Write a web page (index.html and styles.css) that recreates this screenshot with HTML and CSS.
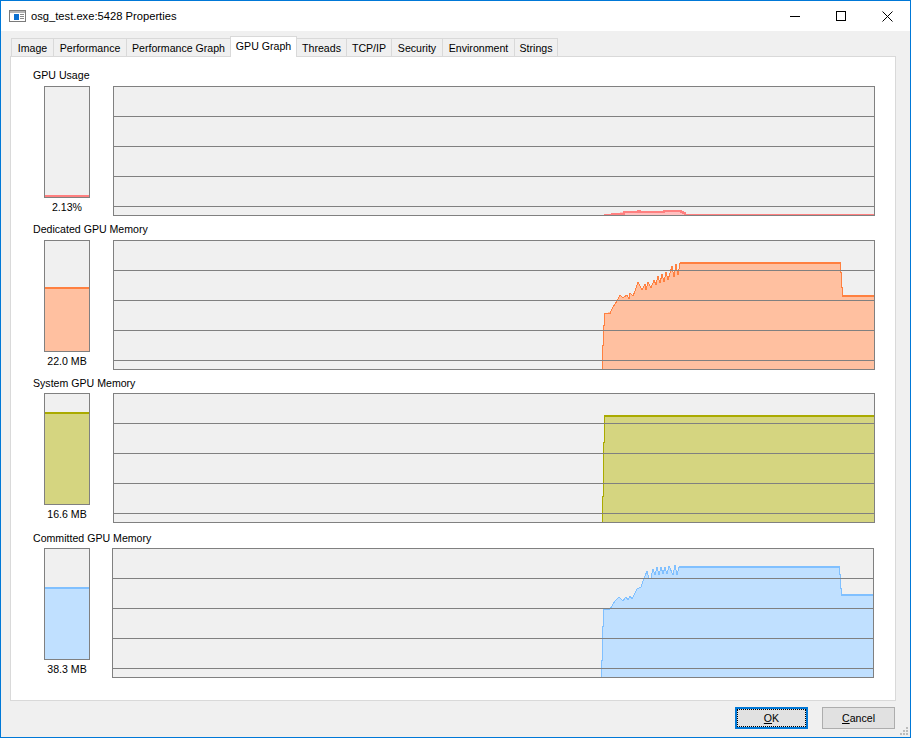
FILE: index.html
```html
<!DOCTYPE html>
<html lang="en">
<head>
  <meta charset="UTF-8" />
  <title>osg_test.exe:5428 Properties</title>
  <link rel="stylesheet" href="styles.css">
</head>
<body>
  <div class="window">
    <div class="titlebar">
      <svg class="app-icon" width="17" height="12" viewBox="0 0 17 12">
        <rect x="0.5" y="0.5" width="16" height="11" fill="#fff" stroke="#7a7a7a"/>
        <rect x="1" y="1" width="15" height="2" fill="#b5b5b5"/>
        <rect x="5" y="4" width="5" height="6" fill="#0a6fd0"/>
        <path d="M11 4.5h4M11 6.5h4M11 8.5h4" stroke="#8a8a8a"/>
      </svg>
      <span class="title">osg_test.exe:5428 Properties</span>
      <div class="controls">
        <button class="ctl"><svg width="10" height="10" viewBox="0 0 10 10"><path d="M0 5.5h10" stroke="#000"/></svg></button>
        <button class="ctl"><svg width="10" height="10" viewBox="0 0 10 10"><rect x="0.5" y="0.5" width="9" height="9" fill="none" stroke="#000"/></svg></button>
        <button class="ctl ctl-close"><svg width="11" height="11" viewBox="0 0 11 11"><path d="M0.5 0.5l10 10M10.5 0.5l-10 10" stroke="#000"/></svg></button>
      </div>
    </div>

    <div class="panel">
      <div class="tabs">
        <div class="tab tab-image">Image</div>
        <div class="tab tab-perf">Performance</div>
        <div class="tab tab-perfgraph">Performance Graph</div>
        <div class="tab tab-gpu active">GPU Graph</div>
        <div class="tab tab-threads">Threads</div>
        <div class="tab tab-tcp">TCP/IP</div>
        <div class="tab tab-security">Security</div>
        <div class="tab tab-env">Environment</div>
        <div class="tab tab-strings">Strings</div>
      </div>

      <div class="pane">
        <section class="section">
          <div class="section-label">GPU Usage</div>
          <div class="section-row">
            <div class="meter-col">
              <div class="meter"><div class="meter-fill usage" style="height:2px"></div></div>
              <div class="meter-value">2.13%</div>
            </div>
            <svg class="graph" viewBox="114 87 760 128">
              <path class="fill-usage" d="M604 215V214L612 213.5L624 212L638 211L640 212H646L647 211.5H664L665 210.5H681L683 212L685 214V215Z"/>
              <path class="line-usage" d="M604 214.5H612V213.5H624V212H638V211H640V212H647V211.5H664V210.5H670V211H672V210.5H681V211.5H683V213H685V214.5M686 214.5H874"/>
              <path class="grid" d="M114 116.5H874M114 146.5H874M114 176.5H874M114 206.5H874"/>
            </svg>
          </div>
        </section>

        <section class="section">
          <div class="section-label">Dedicated GPU Memory</div>
          <div class="section-row">
            <div class="meter-col">
              <div class="meter"><div class="meter-fill dedicated" style="height:64px"></div></div>
              <div class="meter-value">22.0 MB</div>
            </div>
            <svg class="graph" viewBox="114 241 760 128">
              <path class="fill-dedicated" d="M603 369V345H604V325H605V313L610 312L613 307L617 301L620 295L623 298L627 295L629 299L630 293L633 296L635 291L638 282L642 290L645 284L646 290L648 282L651 288L654 280L656 285L658 276L660 283L662 274L664 282L666 272L668 280L672 266L674 277L676 264L678 275L680 263H841V272H842V287H843V296H874V369Z"/>
              <path class="line-dedicated" d="M602.5 369V345H603.5V325H604.5V313.5H610L613 307L617 301L620 295L623 298L627 295L629 299L630 293L633 296L635 291L638 282L642 290L645 284L646 290L648 282L651 288L654 280L656 285L658 276L660 283L662 274L664 282L666 272L668 280L672 266L674 277L676 264L678 275L680 263"/>
              <path class="line-dedicated" d="M840.5 263V272H841.5V287H842.5V296"/>
              <path class="line-dedicated thick" d="M680 263H841M842 296H874"/>
              <path class="grid" d="M114 270.5H874M114 300.5H874M114 330.5H874M114 360.5H874"/>
            </svg>
          </div>
        </section>

        <section class="section section-system">
          <div class="section-label">System GPU Memory</div>
          <div class="section-row">
            <div class="meter-col">
              <div class="meter"><div class="meter-fill system" style="height:92px"></div></div>
              <div class="meter-value">16.6 MB</div>
            </div>
            <svg class="graph" viewBox="114 394 760 128">
              <path class="fill-system" d="M603 522V496H604V442H605V416H874V522Z"/>
              <path class="line-system" d="M602.5 522V496H603.5V442H604.5V416"/>
              <path class="line-system thick" d="M604 416H874"/>
              <path class="grid" d="M114 423.5H874M114 453.5H874M114 483.5H874M114 513.5H874"/>
            </svg>
          </div>
        </section>

        <section class="section section-committed">
          <div class="section-label">Committed GPU Memory</div>
          <div class="section-row">
            <div class="meter-col">
              <div class="meter"><div class="meter-fill committed" style="height:72px"></div></div>
              <div class="meter-value">38.3 MB</div>
            </div>
            <svg class="graph" viewBox="113 549 760 128">
              <path class="fill-committed" d="M602 677V660H603V626H604V609H610L612 606L615 601L619 597L623 601L626 597L628 600L630 596L632 599L637 589L641 587L643 581L647 571L649 579L651 578L653 569L655 575L657 567L659 575L661 567L663 574L665 567L667 574L669 566L673 575L675 565L677 575L679 567H840V574H841V588H842V595H873V677Z"/>
              <path class="line-committed" d="M601.5 677V660H602.5V626H603.5V609H610L612 606L615 601L619 597L623 601L626 597L628 600L630 596L632 599L637 589L641 587L643 581L647 571L649 579L651 578L653 569L655 575L657 567L659 575L661 567L663 574L665 567L667 574L669 566L673 575L675 565L677 575L679 567"/>
              <path class="line-committed" d="M839.5 567V574H840.5V588H841.5V595"/>
              <path class="line-committed thick" d="M679 567H840M841 595H873"/>
              <path class="grid" d="M113 578.5H873M113 608.5H873M113 638.5H873M113 668.5H873"/>
            </svg>
          </div>
        </section>
      </div>

      <div class="footer">
        <button class="btn btn-default"><span class="focus"><u>O</u>K</span></button>
        <button class="btn"><span><u>C</u>ancel</span></button>
      </div>
    </div>

    <svg class="grip" width="9" height="9" viewBox="0 0 9 9">
      <path d="M6 0h2v2H6zM3 3h2v2H3zM6 3h2v2H6zM0 6h2v2H0zM3 6h2v2H3zM6 6h2v2H6z" fill="#bcbcbc"/>
    </svg>
  </div>
</body>
</html>
```

FILE: styles.css
```css
* {
  box-sizing: border-box;
}
body {
  margin: 0;
  background: #f0f0f0;
  color: #000;
  font-family: "Liberation Sans", Arial, sans-serif;
  font-size: 10.6px;
}
.window {
  position: relative;
  width: 911px;
  height: 738px;
  border: 1px solid #0078d7;
  background: #f0f0f0;
  display: flex;
  flex-direction: column;
}

/* title bar */
.titlebar {
  height: 30px;
  flex: none;
  background: #fff;
  display: flex;
  align-items: center;
  padding-left: 8px;
}
.title {
  margin-left: 5px;
  font-size: 11.2px;
  white-space: nowrap;
}
.controls {
  margin-left: auto;
  display: flex;
  align-self: stretch;
}
.ctl {
  width: 46px;
  padding: 0;
  border: none;
  background: #fff;
  display: flex;
  align-items: center;
  justify-content: center;
}

/* tabs */
.panel {
  flex: 1;
  padding: 5px 14px 0 9px;
}
.tabs {
  display: flex;
  align-items: flex-end;
  height: 21px;
  padding-left: 1px;
  margin-bottom: -1px;
  position: relative;
  z-index: 1;
}
.tab {
  height: 19px;
  border: 1px solid #d9d9d9;
  border-left: none;
  background: #f0f0f0;
  text-align: center;
  line-height: 19px;
  white-space: nowrap;
}
.tab:first-child {
  border-left: 1px solid #d9d9d9;
}
.tab.active {
  height: 21px;
  background: #fff;
  border-left: 1px solid #d9d9d9;
  border-bottom: none;
  line-height: 19px;
  margin-left: -1px;
}
.tab-image { width: 43px; }
.tab-perf { width: 73px; }
.tab-perfgraph { width: 104px; }
.tab-gpu { width: 67px; }
.tab-threads { width: 50px; }
.tab-tcp { width: 45px; }
.tab-security { width: 51px; }
.tab-env { width: 72px; }
.tab-strings { width: 43px; }

/* main pane */
.pane {
  height: 645px;
  background: #fff;
  border: 1px solid #d9d9d9;
  padding: 11px 0 0 22px;
}
.section {
  margin-bottom: 6px;
}
.section-label {
  height: 14px;
  line-height: 14px;
  margin-bottom: 4px;
  white-space: nowrap;
}
.section-row {
  display: flex;
  gap: 23px;
  margin-left: 11px;
}
.meter-col {
  width: 46px;
}
.meter {
  height: 112px;
  border: 1px solid #808080;
  background: #f0f0f0;
  display: flex;
  align-items: flex-end;
}
.meter-fill {
  width: 100%;
  border-top: 2px solid;
}
.meter-value {
  margin-top: 2px;
  line-height: 14px;
  text-align: center;
  white-space: nowrap;
}
.graph {
  width: 762px;
  height: 130px;
  border: 1px solid #808080;
  background: #f0f0f0;
  shape-rendering: crispEdges;
  display: block;
}
.section-system {
  margin-bottom: 8px;
}
.section-system .section-label,
.section-committed .section-label {
  margin-bottom: 3px;
}
.section-committed .section-row {
  gap: 22px;
}

.grid {
  fill: none;
  stroke: #808080;
}
.line-usage, .line-dedicated, .line-system, .line-committed {
  fill: none;
  stroke-width: 1;
}
.thick {
  stroke-width: 2;
}
.line-usage { stroke: #ff8080; stroke-width: 2; }
.fill-usage { fill: #ffc0c0; }
.line-dedicated { stroke: #ff8040; }
.fill-dedicated { fill: #ffc0a0; }
.line-system { stroke: #aaaa00; }
.fill-system { fill: #d5d580; }
.line-committed { stroke: #80c0ff; }
.fill-committed { fill: #c0e0ff; }

.meter-fill.usage { background: #ffc0c0; border-color: #ff8080; }
.meter-fill.dedicated { background: #ffc0a0; border-color: #ff8040; }
.meter-fill.system { background: #d5d580; border-color: #aaaa00; }
.meter-fill.committed { background: #c0e0ff; border-color: #80c0ff; }

/* footer */
.footer {
  display: flex;
  justify-content: flex-end;
  gap: 14px;
  margin-top: 6px;
  padding-right: 1px;
}
.btn {
  width: 73px;
  height: 22px;
  padding: 0;
  border: 1px solid #adadad;
  background: #e1e1e1;
  font: inherit;
  color: #000;
  display: flex;
  align-items: center;
  justify-content: center;
}
.btn-default {
  border: 2px solid #0078d7;
  padding: 0;
}
.focus {
  width: 100%;
  height: 100%;
  border: 1px dotted #000;
  line-height: 16px;
  text-align: center;
}
.grip {
  position: absolute;
  right: 1px;
  bottom: 1px;
}
```
